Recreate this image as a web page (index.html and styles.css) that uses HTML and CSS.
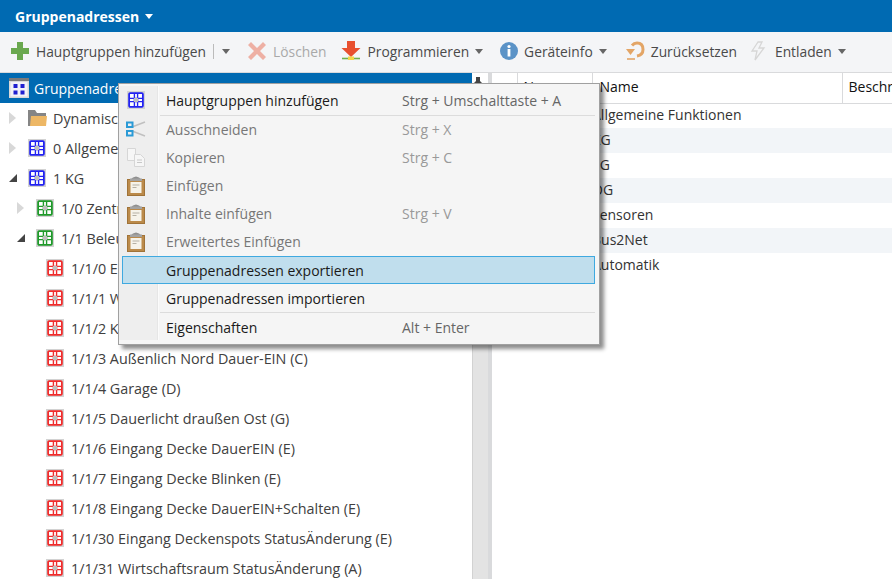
FILE: index.html
```html
<!DOCTYPE html>
<html lang="de">
<head>
<meta charset="UTF-8" />
<title>Gruppenadressen</title>
<link rel="stylesheet" href="styles.css">
</head>
<body>

<svg class="defs" width="0" height="0">
  <symbol id="ga" viewBox="0 0 17 17">
    <rect width="17" height="17" fill="#d2d2d2"/>
    <rect x="2" y="2" width="13" height="13" rx="1" fill="#fff" stroke="currentColor" stroke-width="1.700"/>
    <path d="M7 2v13M10 2v13M2 7h13M2 10h13" stroke="currentColor" stroke-width="1.300" fill="none"/>
    <rect x="6.500" y="6.500" width="4" height="4" fill="#bdbdbd"/>
  </symbol>
  <symbol id="clip" viewBox="0 0 18 21">
    <path d="M3 5q6-7 12 0z" fill="#8f8f8f"/>
    <rect x="0.500" y="4.500" width="17" height="16" fill="#bb8a4a" stroke="#a07338"/>
    <rect x="3.500" y="7" width="11" height="11" fill="#f6f3ea"/>
    <path d="M5.500 10h7M5.500 12.500h4" stroke="#b5b0a4"/>
    <rect x="3" y="3.500" width="12" height="2.500" fill="#a3a3a3"/>
  </symbol>
</svg>

<header class="titlebar">
  <span class="title">Gruppenadressen</span>
  <span class="caret caret-white"></span>
</header>

<nav class="toolbar">
  <span class="tool">
    <svg width="20" height="20" viewBox="0 0 20 20"><path d="M7 1h6v6h6v6h-6v6H7v-6H1V7h6z" fill="#6aa84f"/></svg>
    Hauptgruppen hinzufügen
  </span>
  <span class="tool-sep"></span>
  <span class="caret tool-drop"></span>
  <span class="tool tool-off loeschen">
    <svg width="20" height="20" viewBox="0 0 20 20"><path d="M1 4l3-3 6 6 6-6 3 3-6 6 6 6-3 3-6-6-6 6-3-3 6-6z" fill="#eeb0a4"/></svg>
    Löschen
  </span>
  <span class="tool prog">
    <svg width="20" height="20" viewBox="0 0 20 20"><path d="M6 0h8v7h5.500l-9.500 9-9.500-9H6z" fill="#e8502f"/><path d="M1 17.500h18" stroke="#6fb04e" stroke-width="1.600"/><rect x="7" y="15.500" width="6" height="3.500" fill="#f5d648"/></svg>
    Programmieren
    <span class="caret"></span>
  </span>
  <span class="tool info">
    <svg width="18" height="18" viewBox="0 0 18 18"><circle cx="9" cy="9" r="9" fill="#5b93c7"/><rect x="7.600" y="7" width="2.800" height="7.500" fill="#fff"/><circle cx="9" cy="4.500" r="1.600" fill="#fff"/></svg>
    Geräteinfo
    <span class="caret"></span>
  </span>
  <span class="tool reset">
    <svg width="20" height="20" viewBox="0 0 20 20"><path d="M7 4.500q2-2.500 5-2.500 6 0 6 6.500 0 5.500-6 6.500" fill="none" stroke="#e3a566" stroke-width="3"/><path d="M1 8h9l-4.500 6z" fill="#e3a566"/><path d="M2 18h8" stroke="#e3a566" stroke-width="1.600"/></svg>
    Zurücksetzen
  </span>
  <span class="tool entladen">
    <svg width="16" height="20" viewBox="0 0 16 20"><path d="M8 1L2 10h5l-2 9 9-12H9l3-6z" fill="none" stroke="#d6d6d6" stroke-width="1.300"/></svg>
    <span class="entladen-text">Entladen</span>
    <span class="caret"></span>
  </span>
</nav>

<main class="panes">
  <section class="tree-pane">
    <div class="tree-head">
      <svg width="20" height="20" viewBox="0 0 20 20"><rect width="20" height="20" fill="#d8d8d8"/><rect width="20" height="3" fill="#7a7a7a"/><rect x="1.500" y="4" width="17" height="14.500" fill="#f2f2f8"/><g fill="#1f1fd0"><rect x="4.500" y="6" width="4" height="4"/><rect x="11.500" y="6" width="4" height="4"/><rect x="4.500" y="12.500" width="4" height="4"/><rect x="11.500" y="12.500" width="4" height="4"/></g></svg>
      <span>Gruppenadressen</span>
    </div>
    <ul class="tree">
      <li class="row lvl0"><span class="arrow closed"></span>
        <svg class="ico folder" width="19" height="18" viewBox="0 0 19 18"><path d="M0 17V1h7l2 3h9v13z" fill="#858585"/><path d="M2 17l1-10h16l-1 10z" fill="#edb765"/></svg>
        Dynamische Ordner</li>
      <li class="row lvl0"><span class="arrow closed"></span><svg class="ico ga-blue" width="18" height="18"><use href="#ga"/></svg>0 Allgemein</li>
      <li class="row lvl0"><span class="arrow open"></span><svg class="ico ga-blue" width="18" height="18"><use href="#ga"/></svg>1 KG</li>
      <li class="row lvl1"><span class="arrow closed"></span><svg class="ico ga-green" width="18" height="18"><use href="#ga"/></svg>1/0 Zentral</li>
      <li class="row lvl1"><span class="arrow open"></span><svg class="ico ga-green" width="18" height="18"><use href="#ga"/></svg>1/1 Beleuchtung</li>
      <li class="row lvl2"><svg class="ico ga-red" width="18" height="18"><use href="#ga"/></svg>1/1/0 Eingang</li>
      <li class="row lvl2"><svg class="ico ga-red" width="18" height="18"><use href="#ga"/></svg>1/1/1 Wirtschaftsraum</li>
      <li class="row lvl2"><svg class="ico ga-red" width="18" height="18"><use href="#ga"/></svg>1/1/2 Keller</li>
      <li class="row lvl2"><svg class="ico ga-red" width="18" height="18"><use href="#ga"/></svg>1/1/3 Außenlich Nord Dauer-EIN (C)</li>
      <li class="row lvl2"><svg class="ico ga-red" width="18" height="18"><use href="#ga"/></svg>1/1/4 Garage (D)</li>
      <li class="row lvl2"><svg class="ico ga-red" width="18" height="18"><use href="#ga"/></svg>1/1/5 Dauerlicht draußen Ost (G)</li>
      <li class="row lvl2"><svg class="ico ga-red" width="18" height="18"><use href="#ga"/></svg>1/1/6 Eingang Decke DauerEIN (E)</li>
      <li class="row lvl2"><svg class="ico ga-red" width="18" height="18"><use href="#ga"/></svg>1/1/7 Eingang Decke Blinken (E)</li>
      <li class="row lvl2"><svg class="ico ga-red" width="18" height="18"><use href="#ga"/></svg>1/1/8 Eingang Decke DauerEIN+Schalten (E)</li>
      <li class="row lvl2"><svg class="ico ga-red" width="18" height="18"><use href="#ga"/></svg>1/1/30 Eingang Deckenspots StatusÄnderung (E)</li>
      <li class="row lvl2"><svg class="ico ga-red" width="18" height="18"><use href="#ga"/></svg>1/1/31 Wirtschaftsraum StatusÄnderung (A)</li>
    </ul>
  </section>

  <div class="split">
    <div class="split-head">
      <svg width="10" height="10" viewBox="0 0 10 10"><path d="M3 0h4v4l2 2H1l2-2zM4.500 6h1v4h-1z" fill="#444"/></svg>
    </div>
    <div class="splitter"></div>
  </div>

  <section class="list-pane">
    <table class="list">
      <thead>
        <tr><th class="c1"></th><th class="c2">Nummer</th><th class="c3">Name</th><th>Beschreibung</th></tr>
      </thead>
      <tbody>
        <tr><td></td><td>0</td><td class="pull">Allgemeine Funktionen</td><td></td></tr>
        <tr><td></td><td>1</td><td class="pull">KG</td><td></td></tr>
        <tr><td></td><td>2</td><td class="pull">EG</td><td></td></tr>
        <tr><td></td><td>3</td><td class="pull">OG</td><td></td></tr>
        <tr><td></td><td>4</td><td class="pull">Sensoren</td><td></td></tr>
        <tr><td></td><td>5</td><td class="pull">Bus2Net</td><td></td></tr>
        <tr><td></td><td>6</td><td class="pull">Automatik</td><td></td></tr>
      </tbody>
    </table>
  </section>
</main>

<div class="menu">
  <div class="item"><span class="gut"><svg class="ga-blue" width="18" height="18"><use href="#ga"/></svg></span><span class="lbl">Hauptgruppen hinzufügen</span><span class="key">Strg + Umschalttaste + A</span></div>
  <div class="menu-sep"></div>
  <div class="item off"><span class="gut"><svg width="20" height="16" viewBox="0 0 20 16"><path d="M6 6l13-5M6 10l13 5" stroke="#c0c0c0" stroke-width="1.600"/><g fill="none" stroke="#2a9ad6" stroke-width="2"><rect x="1" y="1.500" width="5.500" height="4.500"/><rect x="1" y="10" width="5.500" height="4.500"/></g></svg></span><span class="lbl">Ausschneiden</span><span class="key">Strg + X</span></div>
  <div class="item off"><span class="gut"><svg width="20" height="20" viewBox="0 0 20 20"><g fill="#f6f6f6" stroke="#d6d6d6"><path d="M1.500 1.500h8v12h-8z"/><path d="M8.500 7.500h6l4 4v8h-10z"/></g><path d="M11 13h5M11 15.500h5" stroke="#c8c8c8"/></svg></span><span class="lbl">Kopieren</span><span class="key">Strg + C</span></div>
  <div class="item off"><span class="gut"><svg width="18" height="21"><use href="#clip"/></svg></span><span class="lbl">Einfügen</span></div>
  <div class="item off"><span class="gut"><svg width="18" height="21"><use href="#clip"/></svg></span><span class="lbl">Inhalte einfügen</span><span class="key">Strg + V</span></div>
  <div class="item off"><span class="gut"><svg width="18" height="21"><use href="#clip"/></svg></span><span class="lbl">Erweitertes Einfügen</span></div>
  <div class="item active"><span class="gut"></span><span class="lbl">Gruppenadressen exportieren</span></div>
  <div class="item"><span class="gut"></span><span class="lbl">Gruppenadressen importieren</span></div>
  <div class="menu-sep"></div>
  <div class="item"><span class="gut"></span><span class="lbl">Eigenschaften</span><span class="key">Alt + Enter</span></div>
</div>

</body>
</html>
```

FILE: styles.css
```css
* { box-sizing: border-box; }
html, body { height: 100%; }
body {
  margin: 0;
  overflow: hidden;
  position: relative;
  display: flex;
  flex-direction: column;
  background: #fff;
  color: #333;
  font-family: "Open Sans", "Noto Sans", sans-serif;
  font-size: 14px;
}
.defs { position: absolute; }

.caret {
  display: inline-block;
  width: 0;
  height: 0;
  border-left: 4.500px solid transparent;
  border-right: 4.500px solid transparent;
  border-top: 5px solid #666;
}
.caret-white { border-top-color: #fff; margin-left: 6px; }

.titlebar {
  height: 32px;
  flex: none;
  display: flex;
  align-items: center;
  padding-left: 15px;
  background: #006ab2;
  color: #fff;
}
.title { font-weight: 700; font-size: 14px; }

.toolbar {
  height: 41px;
  flex: none;
  display: flex;
  align-items: center;
  padding: 0 0 2px 10px;
  background: #f4f5f7;
  border-bottom: 1px solid #d9dadc;
  color: #4a4a4a;
  font-size: 13.8px;
}
.tool { display: flex; align-items: center; gap: 6px; white-space: nowrap; }
.tool .caret { margin-left: 0; }
.tool-sep { width: 1px; height: 15px; margin-left: 7px; background: #bbb; }
.tool-drop { margin-left: 8px; }
.tool-off { color: #a9a9a9; }
.loeschen { margin-left: 17px; }
.prog { margin-left: 15px; }
.info { margin-left: 17px; }
.reset { margin-left: 18px; }
.entladen { margin-left: 13px; }
.entladen-text { margin-left: 3px; }

.panes { flex: 1; display: flex; min-height: 0; }

.tree-pane { width: 472px; flex: none; overflow: hidden; }
.tree-head {
  height: 30px;
  display: flex;
  align-items: center;
  gap: 5px;
  padding-left: 9px;
  background: #006ab2;
  color: #fff;
}
.tree { list-style: none; margin: 0; padding: 0; font-size: 14.35px; }
.row {
  height: 30px;
  display: flex;
  align-items: center;
  white-space: nowrap;
  color: #404040;
  position: relative;
}
.lvl0 { padding-left: 28px; }
.lvl1 { padding-left: 36px; }
.lvl2 { padding-left: 46px; }
.ico { margin-right: 7px; flex: none; }
.folder { margin-right: 6px; }
.ga-blue { color: #2222f2; }
.ga-green { color: #1f9a2a; }
.ga-red { color: #f02c2c; }

.arrow { position: absolute; width: 0; height: 0; }
.lvl0 .arrow { left: 9px; }
.lvl1 .arrow { left: 17px; }
.arrow.closed {
  border-left: 7px solid #d8d8d8;
  border-top: 6px solid transparent;
  border-bottom: 6px solid transparent;
}
.arrow.open {
  border-right: 8px solid #444;
  border-top: 8px solid transparent;
}

.split { width: 20px; flex: none; display: flex; flex-direction: column; }
.split-head {
  height: 30px;
  flex: none;
  display: flex;
  justify-content: center;
  padding: 4px 4px 0 0;
  border-right: 4px solid #d9dadc;
  border-bottom: 1px solid #d9dadc;
}
.splitter {
  flex: 1;
  background: #e3e3e3;
  border-left: 1px solid #d2d2d2;
  border-right: 4px solid #d9dadc;
}

.list-pane { flex: 1; overflow: hidden; min-width: 0; }
.list { border-collapse: collapse; table-layout: fixed; width: 500px; color: #333; }
.list th {
  height: 30px;
  padding: 0 6px 2px;
  text-align: left;
  font-weight: 400;
  color: #111;
  background: #fff;
  border-bottom: 1px solid #d9dadc;
  border-right: 1px solid #d9dadc;
  white-space: nowrap;
  overflow: hidden;
}
.c1 { width: 25px; }
.c2 { width: 75px; }
.c3 { width: 250px; }
.list th.c3 { padding-left: 7px; }
.list td { height: 25px; padding: 0 7px 2px; white-space: nowrap; }
.list .pull { padding-left: 0; }
.list tbody tr:nth-child(even) { background: #f2f5f8; }

.menu {
  position: absolute;
  left: 118px;
  top: 83px;
  width: 482px;
  height: 262px;
  padding: 3px 4px 3px 3px;
  background: linear-gradient(90deg, #eeeeee 38px, #e6e6e6 38px, #e6e6e6 39px, #fbfbfb 39px, #fbfbfb 40px) 0 2px / 40px calc(100% - 6px) no-repeat, #f5f5f5;
  border: 1px solid #a0a0a0;
  box-shadow: 4px 4px 4px rgba(0, 0, 0, 0.45);
  color: #1a1a1a;
}
.item {
  height: 28px;
  display: flex;
  align-items: center;
  padding-bottom: 2px;
  border: 1px solid transparent;
}
.gut {
  width: 26px;
  flex: none;
  display: flex;
  align-items: center;
  justify-content: center;
}
.lbl { width: 236px; margin-left: 17px; flex: none; }
.key { color: #666; }
.off .lbl { color: #777; }
.off .key { color: #999; }
.active {
  background: #c0deed;
  border-color: #3fa9e0;
}
.active, .active ~ .item { padding-bottom: 0; }
.menu-sep { height: 1px; margin-left: 38px; background: #dcdcdc; }
```
